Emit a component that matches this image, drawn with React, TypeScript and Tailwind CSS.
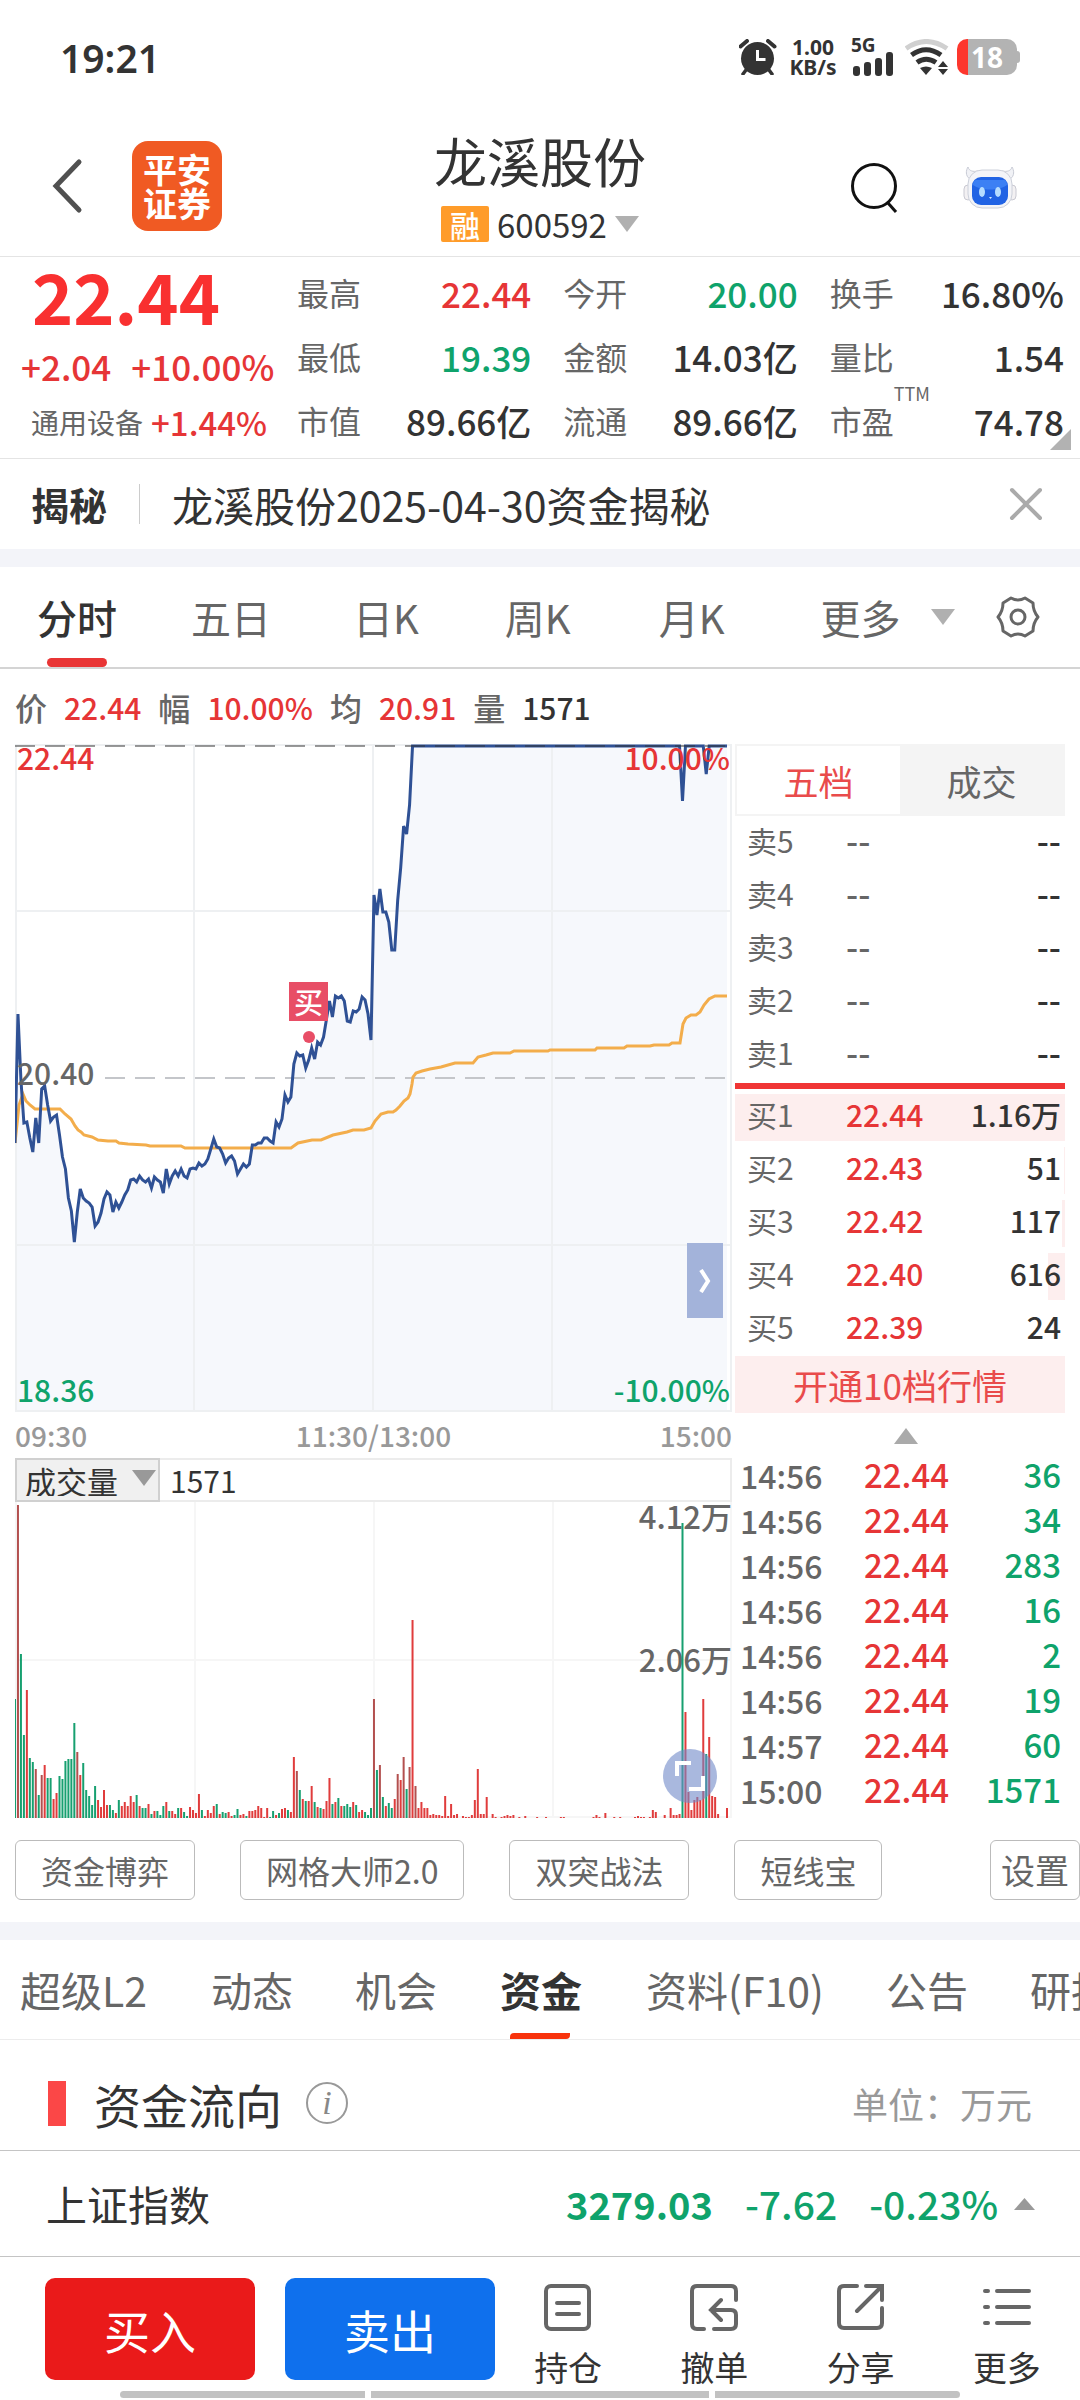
import type { ReactNode } from "react";
import clsx from "clsx";

const RED = "text-[#e63536]";
const GREEN = "text-[#0fa36b]";
const DARK = "text-[#333333]";

const quoteStats = [
  { label: "最高", value: "22.44", color: RED },
  { label: "今开", value: "20.00", color: GREEN },
  { label: "换手", value: "16.80%", color: DARK },
  { label: "最低", value: "19.39", color: GREEN },
  { label: "金额", value: "14.03亿", color: DARK },
  { label: "量比", value: "1.54", color: DARK },
  { label: "市值", value: "89.66亿", color: DARK },
  { label: "流通", value: "89.66亿", color: DARK },
  { label: "市盈", value: "74.78", color: DARK, note: "TTM" },
];

const sells = ["卖5", "卖4", "卖3", "卖2", "卖1"];

const buys = [
  { name: "买1", price: "22.44", volume: "1.16万", depth: 330 },
  { name: "买2", price: "22.43", volume: "51", depth: 1 },
  { name: "买3", price: "22.42", volume: "117", depth: 3 },
  { name: "买4", price: "22.40", volume: "616", depth: 17 },
  { name: "买5", price: "22.39", volume: "24", depth: 0 },
];

const ticks = [
  ["14:56", "22.44", "36"],
  ["14:56", "22.44", "34"],
  ["14:56", "22.44", "283"],
  ["14:56", "22.44", "16"],
  ["14:56", "22.44", "2"],
  ["14:56", "22.44", "19"],
  ["14:57", "22.44", "60"],
  ["15:00", "22.44", "1571"],
];

// one entry per minute, distance from the top of the price chart
const priceLine = [
  399, 270, 336, 379, 378, 394, 408, 374, 399, 345, 342, 361, 377, 373, 371, 391, 413, 425, 454, 467,
  498, 468, 445, 454, 457, 459, 463, 482, 478, 469, 455, 448, 451, 468, 458, 464, 458, 451, 446, 436,
  435, 438, 432, 436, 438, 435, 444, 433, 436, 438, 449, 425, 440, 432, 427, 432, 425, 432, 434, 425,
  424, 425, 419, 422, 420, 415, 405, 395, 403, 404, 410, 419, 414, 412, 417, 430, 425, 420, 423, 420,
  401, 401, 399, 399, 394, 394, 397, 399, 378, 383, 375, 351, 358, 353, 320, 309, 312, 311, 324, 316,
  304, 315, 298, 301, 293, 275, 257, 273, 252, 254, 252, 257, 277, 278, 267, 268, 265, 253, 256, 270,
  296, 151, 171, 145, 168, 168, 178, 206, 206, 156, 124, 82, 90, 61,
  ...Array(91).fill(2),
  57,
  ...Array(7).fill(2),
  30,
  ...Array(7).fill(2),
];

const averageLine =
  "0,399 4,361 8,350 11,357 15,361 20,365 45,365 50,370 56,375 60,382 63,386 66,388 69,391 77,393 83,396 93,397 101,397 104,399 113,400 131,401 135,402 166,402 170,404 276,404 283,399 297,396 306,396 318,391 332,388 338,386 349,386 356,384 360,377 366,370 373,368 378,368 381,366 385,362 389,357 393,354 395,350 397,340 398,333 401,329 407,327 415,325 426,323 440,319 458,319 463,313 471,311 478,309 495,309 499,307 533,307 535,306 580,306 582,304 609,304 612,302 635,302 639,301 654,301 657,299 665,299 668,280 671,274 676,271 681,271 685,268 689,261 694,255 700,252 712,252";

// volume per minute, a negative value is a minute that closed down
const volumes = [
  -119, 313, -164, -83, 128, -60, -56, 49, -23, 43, 53, -40, -40, 19, 25, -42, -39, -57, -59, -59,
  -95, 66, 43, -55, -28, -22, -13, -32, 18, 11, 28, 13, -13, -8, 5, -18, 12, 16, 12, 22,
  16, -23, 12, -10, -10, 14, -4, 7, -7, -3, -12, 16, -7, 7, 4, -10, 10, -6, -2, 11,
  8, 5, 24, -8, 2, 8, 5, 12, -14, 4, -6, -5, 6, 2, -3, -9, 3, 4, -2, 7,
  7, 8, 12, 10, 1, 10, -1, -7, 3, -5, 9, 10, -8, 6, 61, 47, -28, 19, -17, 17,
  32, -16, 11, -10, 9, 17, 40, -14, 16, -20, 12, -12, -14, -11, 16, -13, 6, 8, -6, -3,
  -10, 119, -48, 53, -21, 12, -15, -10, 19, 44, 38, 61, -29, 51, 198, 32, 10, 16, 10, 10,
  3, 4, 3, 3, 2, 22, 2, 14, 3, 4, 0, 2, 1, 1, 3, 18, 49, 4, 4, 21,
  0, 4, 1, 0, 1, 2, 3, 2, 3, 0, 1, 0, 2, 0, 0, 0, 1, 0, 0, 1,
  0, 0, 0, 0, 1, 1, 0, 0, 0, 0, 0, 0, 0, 0, 0, 1, 3, 1, 0, 5,
  0, 0, 1, 0, 1, 0, 0, 0, 0, 1, 2, 1, 1, 0, 1, 8, 6, 0, 0, 3,
  0, 10, 3, 3, 4, -295, 106, 26, 8, 18, 21, 18, 119, -64, 81, 22, 21, 4, 0, 0, 10,
];

const MINUTE = 712 / 240;

export default function App() {
  return (
    <div className={clsx("w-full overflow-hidden bg-white font-['Noto_Sans_CJK_SC',sans-serif]", DARK)}>
      <StatusBar />
      <Header />
      <Quote />
      <News />
      <PeriodTabs />
      <InfoRow />
      <div className="flex gap-[3px] px-[15px]">
        <div className="min-w-0 flex-1">
          <PriceChart />
          <div className="flex h-[46px] items-center justify-between text-[28px] leading-none font-medium text-[#999999]">
            <span>09:30</span>
            <span>11:30/13:00</span>
            <span>15:00</span>
          </div>
          <VolumeChart />
        </div>
        <div className="w-[330px] shrink-0">
          <OrderBook />
          <Ticks />
        </div>
      </div>
      <Strategies />
      <SectionTabs />
      <FundFlow />
      <IndexRow />
      <ActionBar />
    </div>
  );
}

function StatusBar() {
  return (
    <div className="flex h-[114px] items-center justify-between pr-[60px] pl-[60px] font-['Noto_Sans',sans-serif]">
      <span className="text-[39px] leading-none font-semibold">19:21</span>
      <div className="flex items-center">
        <svg width="38" height="36" viewBox="0 0 38 36" fill="none" stroke="#333">
          <circle cx="18.5" cy="19.5" r="16.5" fill="#333" stroke="none" />
          <path d="M18.5 11v9.5h8" stroke="#fff" strokeWidth="3" />
          <path d="M1.5 7.5 8 2M35.500 7.500 29 2" strokeWidth="4" strokeLinecap="round" />
          <path d="M7 31 4 35M30 31l3 4" strokeWidth="3.500" strokeLinecap="round" />
        </svg>
        <div className="ml-3 w-[48px] text-center text-[21px] leading-[20px] font-bold">
          <div>1.00</div>
          <div>KB/s</div>
        </div>
        <div className="ml-3.5 flex w-[44px] flex-col">
          <span className="h-[13px] text-[19px] leading-[13px] font-bold">5G</span>
          <svg width="44" height="24" viewBox="0 0 44 24" fill="#333">
            <rect x="2" y="14" width="7" height="10" rx="3" />
            <rect x="13" y="10" width="7" height="14" rx="3" />
            <rect x="24" y="6" width="7" height="18" rx="3" />
            <rect x="35" y="0" width="7" height="24" rx="3" />
          </svg>
        </div>
        <svg className="ml-2.5" width="44" height="36" viewBox="0 0 44 36" fill="none" stroke="#333" strokeWidth="5">
          <path d="M1 9.500Q21 -4.500 42 9.500" stroke="#d0d0d0" />
          <path d="M6.500 16Q21 5.500 36 16" />
          <path d="M12 23.500Q21 17 31 23.500" />
          <path d="M15 29Q21 26 27 29l-6 7Z" fill="#333" stroke="none" />
          <path d="m38 22 5 6h-10ZM38 36l5-6h-10Z" fill="#333" stroke="none" />
        </svg>
        <div className="ml-2 flex h-9 w-[60px] items-center justify-center rounded-[10px] bg-linear-to-r from-[#fd372d] from-[18%] to-[#b3b3b3] to-[18%] text-[28px] leading-none font-bold text-white">
          18
        </div>
        <span className="h-3 w-[3px] rounded-r bg-[#b3b3b3]" />
      </div>
    </div>
  );
}

function Header() {
  return (
    <header className="flex h-[143px] items-center justify-between border-b border-[#e4e4e4] pt-0.5 pr-[63px] pl-[50px]">
      <div className="flex w-[300px] items-center">
        <button aria-label="返回">
          <svg width="34" height="56" viewBox="0 0 34 56" fill="none" stroke="#505050" strokeWidth="5" strokeLinecap="round">
            <path d="M29 4 6 28l23 24" />
          </svg>
        </button>
        <div className="ml-12 flex size-[90px] flex-col items-center justify-center rounded-2xl bg-[#f05a23] text-[34px] leading-[34px] font-bold text-white">
          <span>平安</span>
          <span>证券</span>
        </div>
      </div>
      <div className="flex flex-col items-center">
        <h1 className="text-[53px] leading-[60px]">龙溪股份</h1>
        <div className="mt-4 flex items-center">
          <span className="flex h-9 w-12 items-center justify-center rounded-xs bg-[#ff9c2a] text-[30px] leading-none font-medium text-white">
            融
          </span>
          <span className="ml-2 text-[33px] leading-9">600592</span>
          <Triangle className="ml-2 text-[#b0b0b0]" />
        </div>
      </div>
      <div className="mt-1 flex w-[287px] items-center justify-end">
        <button aria-label="搜索">
          <svg width="48" height="52" viewBox="0 0 48 52" fill="none" stroke="#111" strokeWidth="3">
            <circle cx="24" cy="24" r="21.500" />
            <path d="m38 41 8 9" />
          </svg>
        </button>
        <button className="ml-[65px]" aria-label="智能助手">
          <svg width="54" height="44" viewBox="0 0 54 44">
            <path d="M7 13C2 10 3 4 5 1c1 4 5 5 10 4l-2 6ZM47 13c5-3 4-9 2-12-1 4-5 5-10 4l2 6Z" fill="#f1f2f6" stroke="#c9ccd6" />
            <rect x="1" y="19" width="8" height="15" rx="4" fill="#f3f1f3" stroke="#c9c9d2" />
            <rect x="45" y="19" width="8" height="15" rx="4" fill="#f3f1f3" stroke="#c9c9d2" />
            <rect x="5" y="4" width="44" height="38" rx="14" fill="#f3f4f8" stroke="#ccd0da" />
            <rect x="9" y="11" width="36" height="28" rx="9" fill="#2163e4" />
            <path d="M14 14h26c3 0 4 2 4 5-8 6-26 6-34 0 0-3 1-5 4-5Z" fill="#3c80f4" />
            <ellipse cx="19" cy="26" rx="3" ry="5" fill="#b5dcff" />
            <ellipse cx="35" cy="26" rx="3" ry="5" fill="#b5dcff" />
            <path d="M26 31h3l-1.500 2Z" fill="#d8ecff" />
          </svg>
        </button>
      </div>
    </header>
  );
}

function Quote() {
  return (
    <section className="relative flex h-[202px] items-start border-b border-[#e4e4e4] pt-[3px]">
      <div className={clsx("w-[297px] shrink-0", RED)}>
        <div className="mt-0.5 pl-8 text-[70px] leading-[66px] font-bold text-[#f93030]">22.44</div>
        <div className="mt-[13px] flex gap-5 pl-[21px] text-[35px] leading-[50px] font-medium">
          <span>+2.04</span>
          <span>+10.00%</span>
        </div>
        <div className="mt-1 flex items-center gap-2 pl-[31px]">
          <span className="text-[28px] leading-[54px] text-[#666666]">通用设备</span>
          <span className="text-[33px] leading-[54px] font-medium">+1.44%</span>
        </div>
      </div>
      <dl className="grid flex-1 grid-cols-3 gap-x-8 pr-4">
        {quoteStats.map((s) => (
          <div key={s.label} className="flex h-16 items-center justify-between">
            <dt className="flex text-[32px] leading-none text-[#666666]">
              {s.label}
              {s.note && <sup className="-top-5 text-[18px] leading-none">{s.note}</sup>}
            </dt>
            <dd className={clsx("text-[35px] leading-none font-medium", s.color)}>{s.value}</dd>
          </div>
        ))}
      </dl>
      <svg className="absolute right-[9px] bottom-2" width="21" height="21" viewBox="0 0 21 21">
        <path d="M21 0v21H0Z" fill="#b2b2b2" />
      </svg>
    </section>
  );
}

function News() {
  return (
    <div className="flex h-[90px] items-center px-[31px]">
      <span className="text-[38px] leading-none font-bold">揭秘</span>
      <span className="ml-8 h-10 w-px bg-[#cccccc]" />
      <a href="#news" className="ml-8 flex-1 text-[41px] leading-none">
        龙溪股份2025-04-30资金揭秘
      </a>
      <button aria-label="关闭" className="mr-1.5">
        <svg width="34" height="34" viewBox="0 0 34 34" stroke="#aaa" strokeWidth="4" strokeLinecap="round">
          <path d="m3 3 28 28M31 3 3 31" />
        </svg>
      </button>
    </div>
  );
}

function PeriodTabs() {
  return (
    <nav className="flex h-[120px] items-center border-t-[18px] border-b-2 border-t-[#f3f4f9] border-b-[#d4d4d4] text-[40px] leading-none text-[#666666]">
      <button className={clsx("relative ml-[37px] h-full font-medium", DARK)}>
        分时
        <span className="absolute bottom-0 left-2.5 h-[9px] w-[60px] rounded-full bg-[#e93535]" />
      </button>
      <button className="ml-[74px]">五日</button>
      <button className="ml-[82px]">日K</button>
      <button className="ml-[86px]">周K</button>
      <button className="ml-[88px]">月K</button>
      <button className="ml-24 flex items-center">
        更多
        <Triangle className="ml-[30px] text-[#b0b0b0]" />
      </button>
      <button className="mr-10 ml-auto" aria-label="图表设置">
        <svg width="44" height="44" viewBox="0 0 44 44" fill="none" stroke="#666" strokeWidth="3" strokeLinejoin="round">
          <path d="M15 3q7 4 14 0l8 5q0 8 5 14-5 6-5 14l-8 5q-7-4-14 0l-8-5q0-8-5-14 5-6 5-14Z" />
          <circle cx="22" cy="22" r="7" />
        </svg>
      </button>
    </nav>
  );
}

function InfoRow() {
  return (
    <div className={clsx("flex h-[75px] items-center gap-[17px] pl-[15px] text-[30px] leading-none font-medium", RED)}>
      <span className="text-[32px] text-[#666666]">价</span>
      <span>22.44</span>
      <span className="text-[32px] text-[#666666]">幅</span>
      <span>10.00%</span>
      <span className="text-[32px] text-[#666666]">均</span>
      <span>20.91</span>
      <span className="text-[32px] text-[#666666]">量</span>
      <span className={DARK}>1571</span>
    </div>
  );
}

function PriceChart() {
  const line = priceLine.map((y, i) => `${i * MINUTE},${y}`).join(" ");
  return (
    <div className="relative text-[30px] leading-none font-medium">
      <svg className="block h-[668px] w-full" viewBox="0 0 717 668" preserveAspectRatio="none" fill="none">
        <polygon points={`${line} 712,668 0,668`} fill="#f6f8fc" />
        <path d="M1 1v666h715V1ZM179 1v666M358 1v666M537 1v666M1 167h716M1 501h716" stroke="#eef0f2" strokeWidth="2" />
        <path d="M90 334h622" stroke="#c4c6ca" strokeWidth="2" strokeDasharray="20 10" />
        <polyline points={averageLine} stroke="#f3ad4b" strokeWidth="3" />
        <polyline points={line} stroke="#2f5195" strokeWidth="3" />
        <path d="M0 2h717" stroke="#333" strokeOpacity="0.5" strokeWidth="2" strokeDasharray="20 10" />
        <circle cx="294" cy="293" r="6" fill="#e84e66" />
      </svg>
      <span className={clsx("absolute -top-0.5 left-0.5", RED)}>22.44</span>
      <span className={clsx("absolute -top-0.5 right-0.5", RED)}>10.00%</span>
      <span className="absolute top-[313px] left-0.5 text-[#666666]">20.40</span>
      <span className={clsx("absolute bottom-2 left-0.5", GREEN)}>18.36</span>
      <span className={clsx("absolute right-0.5 bottom-2", GREEN)}>-10.00%</span>
      <span className="absolute top-[238px] left-[274px] flex h-[39px] w-[39px] items-center justify-center bg-[#e84e66] text-[29px] text-white">
        买
      </span>
      <button
        aria-label="展开"
        className="absolute right-[9px] bottom-[94px] flex h-[75px] w-9 items-center justify-center bg-[#a3b3da]"
      >
        <svg width="14" height="24" viewBox="0 0 14 24" fill="none" stroke="#fff" strokeWidth="4">
          <path d="m3 1 7 11-7 11" />
        </svg>
      </button>
    </div>
  );
}

function VolumeChart() {
  return (
    <div>
      <div className="flex h-11 items-stretch border-2 border-[#ececec]">
        <label className="relative -my-0.5 -ml-0.5 block w-[145px] border-2 border-[#d0d0d0] bg-[#f0f0f0]">
          <select aria-label="指标" className="block h-full w-full appearance-none pl-2 text-[31px] leading-none">
            <option>成交量</option>
          </select>
          <Triangle className="pointer-events-none absolute top-2.5 right-0.5 text-[#999999]" />
        </label>
        <span className="ml-2.5 self-center text-[30px] leading-none">1571</span>
      </div>
      <div className="relative text-[31px] leading-none font-medium text-[#666666]">
        <svg className="block h-[316px] w-full" viewBox="0 0 717 316" preserveAspectRatio="none">
          <path d="M1 0v315h715V0M180 0v316M359 0v316M538 0v316M0 158h717" fill="none" stroke="#f6f6f6" strokeWidth="2" />
        </svg>
        <span className="absolute -top-0.5 right-0">4.12万</span>
        <span className="absolute top-[141px] right-0">2.06万</span>
        <svg className="absolute inset-0 h-full w-full" viewBox="1 0 717 316" preserveAspectRatio="none">
          {volumes.map((v, i) => (
            <rect
              key={i}
              x={i * MINUTE}
              y={316 - Math.abs(v)}
              width="2"
              height={Math.abs(v)}
              fill={v < 0 ? "#17a070" : Math.abs(v) > 30 && i % 2 ? "#b3504f" : "#e03c3c"}
            />
          ))}
        </svg>
        <button
          aria-label="全屏"
          className="absolute right-[15px] bottom-[15px] flex size-[54px] items-center justify-center rounded-full bg-[#6f88c8]/60"
        >
          <svg width="30" height="30" viewBox="0 0 30 30" fill="none" stroke="#fff" strokeWidth="4">
            <path d="M2 15V2h14M28 15v13H14" />
          </svg>
        </button>
      </div>
    </div>
  );
}

function OrderBook() {
  return (
    <div>
      <div className="flex h-[72px] border-2 border-[#f4f4f4] text-[35px] leading-none">
        <button className="flex-1 text-[#e94b4b]">五档</button>
        <button className="flex-1 bg-[#f4f4f4] text-[#666666]">成交</button>
      </div>
      <table className="w-full table-fixed text-[30px] leading-none">
        <tbody>
          {sells.map((name) => (
            <tr key={name} className="h-[53px]">
              <td className="w-[111px] p-0 pb-1.5 pl-3 text-[#666666]">{name}</td>
              <td className="p-0 pb-1.5 text-[34px] font-medium text-[#666666]">--</td>
              <td className="p-0 pr-1 pb-1.5 text-right text-[34px] font-medium">--</td>
            </tr>
          ))}
        </tbody>
      </table>
      <div className="mt-0.5 mb-px h-1.5 bg-[#f03535]" />
      <table className="w-full table-fixed text-[30px] leading-none">
        <tbody>
          {buys.map((b) => (
            <tr key={b.name} className="relative h-[53px]">
              <td className="w-[111px] p-0 pb-1.5 pl-3 text-[#666666]">
                <span className="absolute top-1 right-0 h-[47px] bg-[#fdeeee]" style={{ width: b.depth }} />
                <span className="relative">{b.name}</span>
              </td>
              <td className={clsx("relative p-0 pb-1.5 font-medium", RED)}>{b.price}</td>
              <td className="relative p-0 pr-1 pb-1.5 text-right font-medium">{b.volume}</td>
            </tr>
          ))}
        </tbody>
      </table>
      <button className="mt-px block h-[57px] w-full bg-[#fdeeee] text-[35px] leading-none text-[#e94b4b]">
        开通10档行情
      </button>
      <button aria-label="收起" className="flex h-[45px] w-full items-center justify-center pl-3">
        <Triangle className="rotate-180 text-[#aaaaaa]" />
      </button>
    </div>
  );
}

function Ticks() {
  return (
    <table className="-mt-1.5 w-full table-fixed text-[33px] leading-none font-medium">
      <tbody>
        {ticks.map(([time, price, volume], i) => (
          <tr key={i} className="h-[45px]">
            <td className="w-[129px] p-0 pl-[5px] text-[32px] text-[#666666]">{time}</td>
            <td className={clsx("p-0", RED)}>{price}</td>
            <td className={clsx("w-[90px] p-0 pr-1 text-right", GREEN)}>{volume}</td>
          </tr>
        ))}
      </tbody>
    </table>
  );
}

function Strategies() {
  return (
    <div className="flex h-[104px] items-center gap-[45px] pl-[15px] text-[32px] leading-none text-[#666666]">
      <Chip>资金博弈</Chip>
      <Chip>网格大师2.0</Chip>
      <Chip>双突战法</Chip>
      <Chip>短线宝</Chip>
      <button className="ml-auto h-[60px] w-[90px] shrink-0 rounded-md border border-[#bbbbbb] text-[34px]">设置</button>
    </div>
  );
}

function Chip({ children }: { children: ReactNode }) {
  return <button className="h-[60px] shrink-0 rounded-md border border-[#bbbbbb] px-[25px]">{children}</button>;
}

function SectionTabs() {
  return (
    <nav className="flex h-[118px] items-center overflow-hidden border-t-[18px] border-b border-t-[#f3f4f9] border-b-[#ececec] pl-5 text-[41px] leading-none whitespace-nowrap text-[#666666]">
      <button className="shrink-0">超级L2</button>
      <button className="ml-16 shrink-0">动态</button>
      <button className="ml-[62px] shrink-0">机会</button>
      <button className={clsx("relative ml-[63px] h-full shrink-0 font-bold", DARK)}>
        资金
        <span className="absolute bottom-0 left-2.5 h-1.5 w-[60px] rounded-tl rounded-br bg-[#f8330c]" />
      </button>
      <button className="ml-16 shrink-0">资料(F10)</button>
      <button className="ml-[62px] shrink-0">公告</button>
      <button className="ml-[62px] shrink-0">研报</button>
    </nav>
  );
}

function FundFlow() {
  return (
    <section className="flex h-[111px] items-center border-b border-[#c4c4c4] pt-4 pr-12 pl-12">
      <span className="h-[45px] w-[18px] bg-[#fb4747]" />
      <h2 className="ml-7 text-[47px] leading-none">资金流向</h2>
      <button
        aria-label="说明"
        className="ml-6 flex size-[42px] items-center justify-center rounded-full border-2 border-[#999999] font-['Liberation_Serif',serif] text-[34px] leading-none text-[#888888] italic"
      >
        i
      </button>
      <span className="ml-auto text-[36px] leading-none text-[#999999]">单位：万元</span>
    </section>
  );
}

function IndexRow() {
  return (
    <section className={clsx("flex h-[106px] items-center border-b border-[#c4c4c4] pr-[45px] pl-[46px] text-[39px] leading-none", GREEN)}>
      <span className={clsx("flex-1 text-[41px]", DARK)}>上证指数</span>
      <span className="text-[38px] font-bold">3279.03</span>
      <span className="ml-8 font-medium">-7.62</span>
      <span className="ml-8 font-medium">-0.23%</span>
      <svg className="ml-4" width="21" height="12" viewBox="0 0 21 12">
        <path d="M10.500 0 21 12H0Z" fill="#999" />
      </svg>
    </section>
  );
}

function ActionBar() {
  return (
    <footer className="relative flex h-36 items-start">
      <div className="mt-[21px] ml-[45px] flex gap-[30px] text-[46px] leading-none text-white">
        <button className="h-[102px] w-[210px] rounded-[10px] bg-[#ea1a1a]">买入</button>
        <button className="h-[102px] w-[210px] rounded-[10px] bg-[#0f70ed]">卖出</button>
      </div>
      <div className="mt-[26px] grid flex-1 grid-cols-4">
        <Action label="持仓">
          <rect x="3" y="3" width="43" height="43" rx="5" />
          <path d="M14 20h22M14 31h22" />
        </Action>
        <Action label="撤单">
          <path d="M47 17V8q0-5-5-5H8Q3 3 3 8v33q0 5 5 5h7M25 46h17q5 0 5-5V32q0-5-5-5H22M32 17 22 27l10 10" />
        </Action>
        <Action label="分享">
          <path d="M21 3H8Q3 3 3 8v32q0 5 5 5h33q5 0 5-5V25M30 3h16v14M46 3 21 28" />
        </Action>
        <Action label="更多">
          <path d="M3 8h3M3 24h3M3 40h3M15 8h32M15 24h32M15 40h32" />
        </Action>
      </div>
      <div className="absolute bottom-[3px] left-[120px] flex h-[7px] w-[840px] gap-1.5 overflow-hidden rounded-full">
        <span className="w-[245px] bg-[#c2c2c2]" />
        <span className="flex-1 bg-[#c2c2c2]" />
        <span className="w-[245px] bg-[#c2c2c2]" />
      </div>
    </footer>
  );
}

function Action({ label, children }: { label: string; children: ReactNode }) {
  return (
    <button className="flex flex-col items-center">
      <svg width="50" height="50" viewBox="0 0 50 50" fill="none" stroke="#666" strokeWidth="4" strokeLinecap="round">
        {children}
      </svg>
      <span className="mt-3.5 text-[34px] leading-10">{label}</span>
    </button>
  );
}

function Triangle({ className }: { className?: string }) {
  return (
    <svg className={className} width="24" height="16" viewBox="0 0 24 16" fill="currentColor">
      <path d="M0 0h24L12 16Z" />
    </svg>
  );
}
